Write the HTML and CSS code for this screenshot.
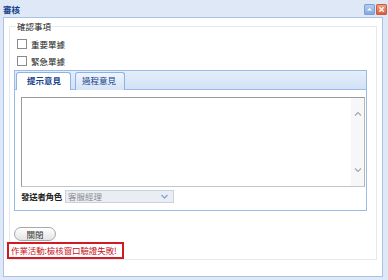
FILE: index.html
```html
<!DOCTYPE html>
<html lang="zh-Hant">
<head>
<meta charset="utf-8">
<title>審核</title>
<link rel="stylesheet" href="styles.css">
</head>
<body>
<div class="win">
  <div class="hdr">
    <span class="title">審核</span>
    <span class="tools">
      <span class="tool tmin"><svg width="11" height="11" viewBox="0 0 11 11"><path d="M3 6.5 L5.5 4 L8 6.5 Z" fill="#fff"/></svg></span>
      <span class="tool tclose"><svg width="11" height="11" viewBox="0 0 11 11"><path d="M3.3 3.3 L7.7 7.7 M7.7 3.3 L3.3 7.7" stroke="#fff6d8" stroke-width="1.6"/></svg></span>
    </span>
  </div>
  <div class="body">
    <fieldset class="fs">
      <legend class="lg">確認事項</legend>
      <label class="cb"><span class="box"></span>重要單據</label>
      <label class="cb"><span class="box"></span>緊急單據</label>
      <div class="tabs">
        <div class="strip">
          <div class="tab active">提示意見</div>
          <div class="tab">過程意見</div>
        </div>
        <div class="tabbody">
          <div class="ta">
            <div class="sb">
              <svg width="8" height="6" viewBox="0 0 8 6"><path d="M1 4.5 L4 1.5 L7 4.5" fill="none" stroke="#a8a8a8" stroke-width="1.2"/></svg>
              <svg width="8" height="6" viewBox="0 0 8 6"><path d="M1 1.5 L4 4.5 L7 1.5" fill="none" stroke="#a8a8a8" stroke-width="1.2"/></svg>
            </div>
          </div>
          <div class="row">
            <span class="rl">發送者角色</span>
            <div class="combo">
              <span class="cv">客服經理</span>
              <svg width="9" height="7" viewBox="0 0 9 7"><path d="M1.5 2 L4.5 5 L7.5 2" fill="none" stroke="#8aa9d6" stroke-width="1.5"/></svg>
            </div>
          </div>
        </div>
      </div>
      <div class="btn">關閉</div>
      <div class="err">作業活動:檢核窗口驗證失敗!</div>
    </fieldset>
  </div>
</div>
</body>
</html>
```
FILE: styles.css
```css
html, body {
  margin: 0;
  padding: 0;
}
body {
  width: 388px;
  height: 280px;
  background: #dfe8f6;
  font-family: "Noto Sans CJK TC", "Liberation Sans", sans-serif;
  font-size: 8.5px;
  color: #222;
  overflow: hidden;
}
.win {
  padding: 0 5px 0 3px;
}
.hdr {
  height: 17px;
  display: flex;
  align-items: center;
  justify-content: space-between;
}
.title {
  color: #15428b;
  font-weight: bold;
  font-size: 8.5px;
  line-height: 10px;
  margin-top: 1px;
}
.tools {
  display: flex;
  gap: 1px;
  margin-right: -4px;
  margin-top: 1px;
}
.tool {
  width: 11px;
  height: 11px;
  border-radius: 2px;
  display: block;
}
.tool svg { display: block; }
.tmin {
  background: linear-gradient(#b9d1f0, #7fa6dc);
  box-shadow: inset 0 0 0 1px #7b9fd2;
}
.tclose {
  background: linear-gradient(#f0a890, #d5573a);
  box-shadow: inset 0 0 0 1px #c65a43;
}
.body {
  height: 258px;
  border: 1px solid #a9c2e6;
  background: #fff;
  overflow: hidden;
}
.fs {
  margin: 3px 0 0 5px;
  width: 368px;
  height: 239px;
  box-sizing: border-box;
  border: 1px solid #e4e8ef;
  padding: 4px 0 0 4px;
  min-width: 0;
}
.lg {
  padding: 0 1px;
  margin-left: 2px;
  line-height: 10px;
  font-size: 8.5px;
  color: #222;
}
.cb {
  display: flex;
  align-items: center;
  height: 17px;
  margin-left: 3px;
  gap: 4px;
  line-height: 10px;
}
.box {
  width: 8px;
  height: 8px;
  border: 1px solid #8a8a8a;
  background: #fff;
}
.tabs {
  margin-top: 1px;
  width: 353px;
}
.strip {
  height: 20px;
  box-sizing: border-box;
  border: 1px solid #99bbe8;
  background: linear-gradient(#e4eefa, #d2e2f6);
  display: flex;
  align-items: flex-end;
  padding-left: 1px;
  gap: 4px;
}
.tab {
  box-sizing: border-box;
  border: 1px solid #8db2e3;
  border-bottom: none;
  border-radius: 3px 3px 0 0;
  background: linear-gradient(#eef4fc, #d6e4f6);
  line-height: 15px;
  padding: 0 8px 0 6px;
  color: #15428b;
  margin-bottom: -1px;
  height: 18px;
}
.tab.active {
  background: #fff;
  font-weight: bold;
  color: #15428b;
  padding: 0 9px 0 10px;
}
.tabbody {
  border: 1px solid #99bbe8;
  border-top: none;
  padding: 7px 1px 7px 6px;
}
.ta {
  height: 90px;
  box-sizing: border-box;
  border: 1px solid #9a9a9a;
  border-right-color: #b5b5b5;
  border-bottom-color: #c4c4c4;
  display: flex;
  justify-content: flex-end;
}
.sb {
  width: 13px;
  background: #f7f7f9;
  display: flex;
  flex-direction: column;
  align-items: center;
  justify-content: space-between;
  padding: 13px 0 13px;
}
.sb svg { display: block; }
.row {
  margin-top: 2px;
  height: 14px;
  display: flex;
  align-items: center;
  gap: 3px;
  line-height: 10px;
}
.rl {
  color: #222;
  font-weight: bold;
  letter-spacing: -0.3px;
}
.combo {
  width: 109px;
  height: 13px;
  box-sizing: border-box;
  border: 1px solid #c9d3e0;
  background: #eaeef4;
  display: flex;
  align-items: center;
  justify-content: space-between;
  padding: 0 4px 0 2px;
}
.cv {
  color: #8a8a8a;
  line-height: 10px;
}
.combo svg { display: block; }
.btn {
  margin-top: 16px;
  width: 42px;
  height: 14px;
  box-sizing: border-box;
  border: 1px solid #a8a8a8;
  border-radius: 7px;
  background: linear-gradient(#ffffff, #e4e4e4);
  text-align: center;
  line-height: 12px;
  color: #333;
}
.err {
  margin: 1px 0 0 -7px;
  width: 117px;
  height: 17px;
  box-sizing: border-box;
  border: 2px solid #d11a24;
  background: #fff;
  color: #c8101a;
  line-height: 13px;
  padding-left: 2px;
  white-space: nowrap;
  letter-spacing: -0.1px;
}
```
